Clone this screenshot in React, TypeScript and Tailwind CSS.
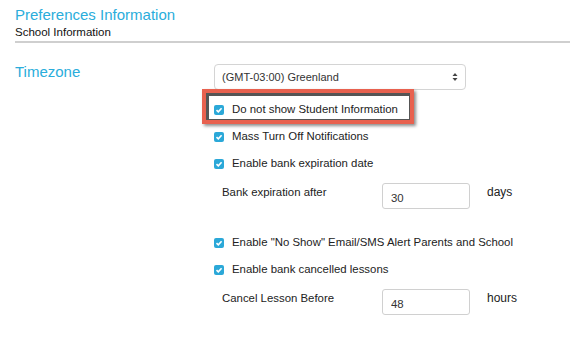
import { useState } from "react";

const Check = ({ label, checked, onToggle }: { label: string; checked: boolean; onToggle: () => void }) => {
    return (
        <label className="flex items-center h-[27px] cursor-pointer">
            <span
                onClick={onToggle}
                className={`w-[10px] h-[10px] rounded-[2px] flex items-center justify-center ${checked ? "bg-[#2ba8d8]" : "bg-white border border-gray-400"}`}
            >
                {checked && (
                    <svg width="8" height="8" viewBox="0 0 8 8">
                        <path d="M1.5 4.2 L3.3 5.9 L6.6 2.2" fill="none" stroke="white" strokeWidth="1.6" />
                    </svg>
                )}
            </span>
            <span className="ml-[8px] text-[11.4px] text-[#222]">{label}</span>
        </label>
    );
};

const NumberRow = ({ label, value, unit }: { label: string; value: string; unit: string }) => {
    return (
        <div className="flex items-start h-[26px] pl-2 text-[11.4px] text-[#222]">
            <span className="w-[160px] mt-[1px]">{label}</span>
            <input
                defaultValue={value}
                className="w-[88px] h-[26px] border border-[#d0d0d0] rounded-[3px] px-[8px] pt-[3px] text-[11.4px] text-[#333] outline-none"
            />
            <span className="ml-[17px] text-[12px]">{unit}</span>
        </div>
    );
};

const App = () => {
    const [opts, setOpts] = useState({
        hideStudent: true,
        massOff: true,
        bankExpiry: true,
        noShow: true,
        bankCancelled: true
    });

    const toggle = (key: keyof typeof opts) => {
        setOpts({ ...opts, [key]: !opts[key] });
    };

    return (
        <div className="w-[584px] h-[344px] bg-white px-[15px] pt-[5px] font-['Liberation_Sans',Arial,sans-serif]">
            <div className="w-[555px] border-b-2 border-[#cfcfcf] pb-[2px]">
                <h1 className="text-[15px] leading-[20px] text-[#2aaddb]">Preferences Information</h1>
                <p className="text-[11.5px] leading-[14px] text-[#111]">School Information</p>
            </div>

            <div className="flex mt-[21px]">
                <div className="w-[199px] text-[15px] leading-[16px] text-[#2aaddb]">Timezone</div>

                <div className="flex flex-col">
                    <div className="w-[252px] h-[26px] border border-[#d4d4d4] rounded-[4px] flex items-center justify-between pl-[7px] pr-[7px] text-[11px] text-[#333]">
                        <span>(GMT-03:00) Greenland</span>
                        <svg width="6" height="10" viewBox="0 0 6 10">
                            <path d="M0.5 4 L3 1 L5.5 4 Z" fill="#444" />
                            <path d="M0.5 6 L3 9 L5.5 6 Z" fill="#444" />
                        </svg>
                    </div>

                    <div className="relative mt-[6px]">
                        <div className="absolute left-[-12px] top-[-7px] w-[212px] h-[35px] border-[4px] border-[#e8614f] shadow-[inset_1px_1px_0_2px_#555,2px_2px_3px_rgba(0,0,0,0.45)] pointer-events-none" />
                        <Check label="Do not show Student Information" checked={opts.hideStudent} onToggle={() => toggle("hideStudent")} />
                    </div>
                    <Check label="Mass Turn Off Notifications" checked={opts.massOff} onToggle={() => toggle("massOff")} />
                    <Check label="Enable bank expiration date" checked={opts.bankExpiry} onToggle={() => toggle("bankExpiry")} />

                    <div className="mt-[6px]">
                        <NumberRow label="Bank expiration after" value="30" unit="days" />
                    </div>

                    <div className="mt-[20px]">
                        <Check label={'Enable "No Show" Email/SMS Alert Parents and School'} checked={opts.noShow} onToggle={() => toggle("noShow")} />
                        <Check label="Enable bank cancelled lessons" checked={opts.bankCancelled} onToggle={() => toggle("bankCancelled")} />
                    </div>

                    <div className="mt-[6px]">
                        <NumberRow label="Cancel Lesson Before" value="48" unit="hours" />
                    </div>
                </div>
            </div>
        </div>
    );
};

export default App;
